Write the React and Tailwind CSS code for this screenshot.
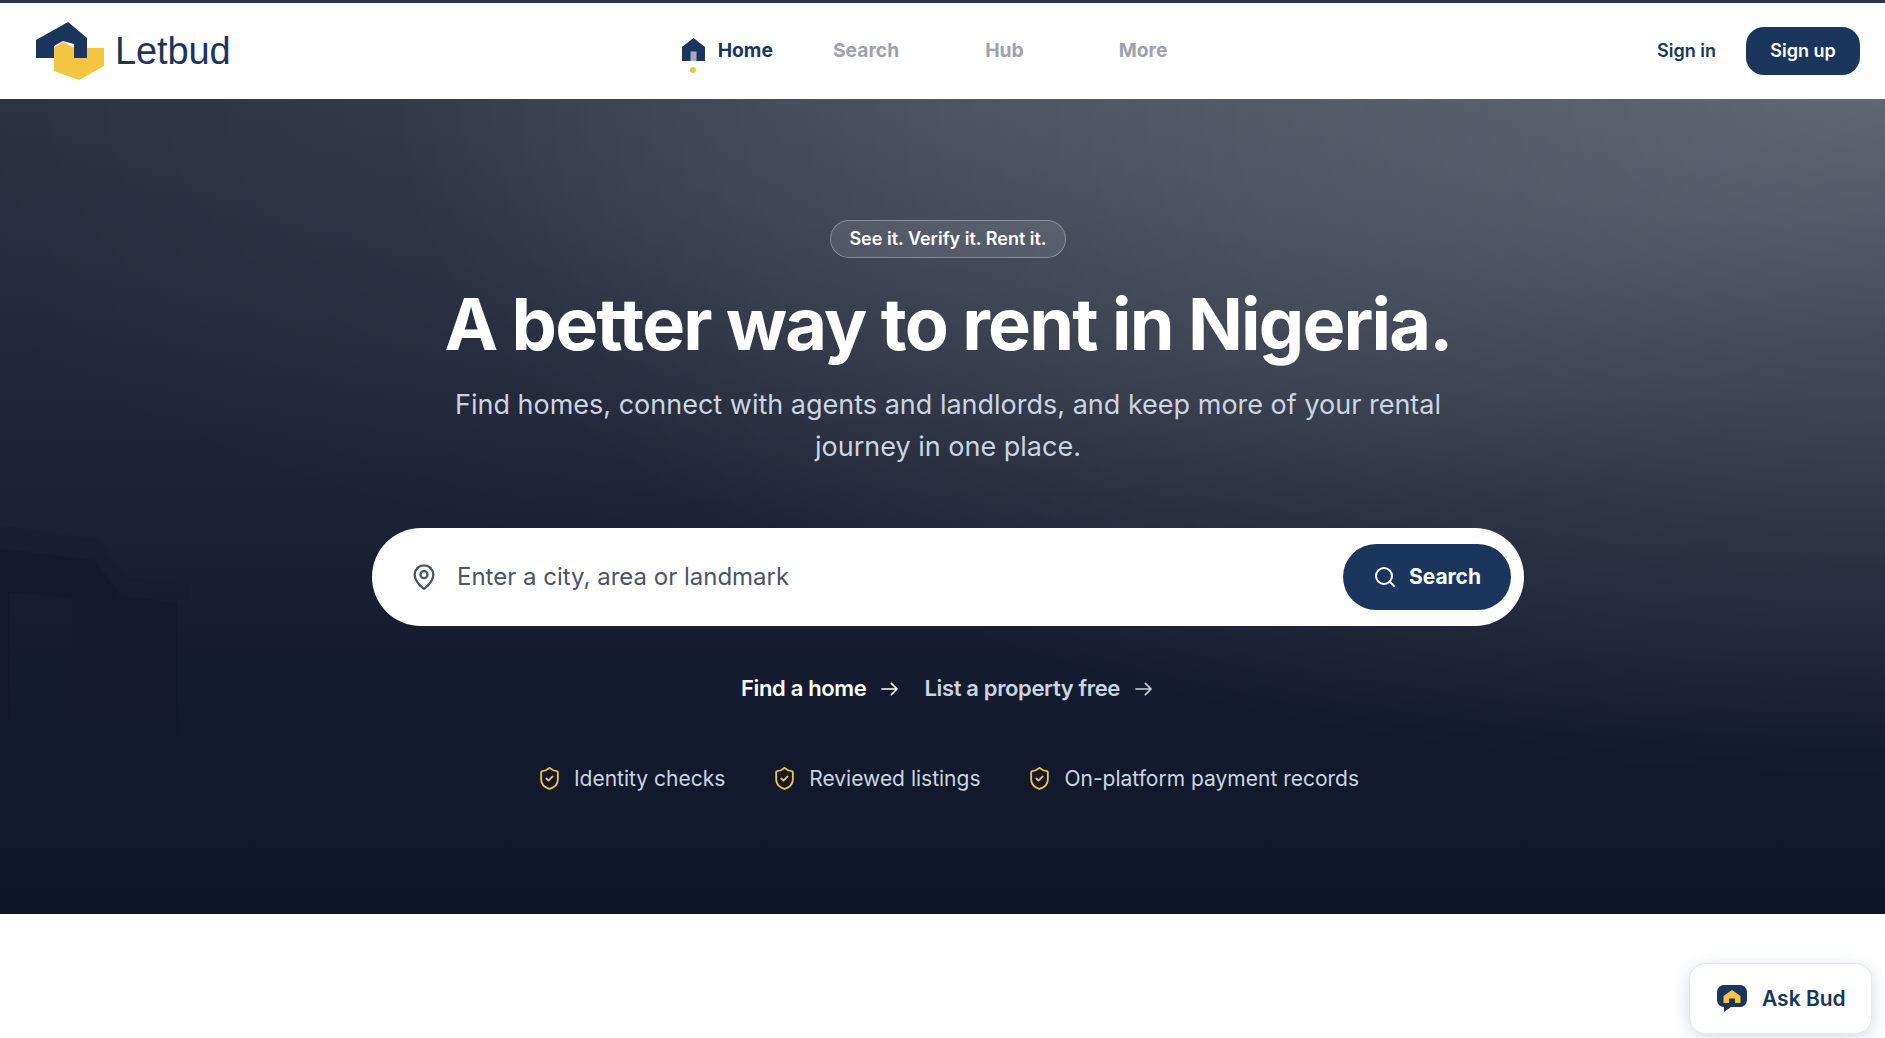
import React from "react";
import { MapPin, Search, ShieldCheck } from "lucide-react";

function Logo() {
  return (
    <svg width="68" height="58" viewBox="36 21 68 58" className="shrink-0">
      <path d="M104 47V65L79 79 54 70V46.500L63 40.700 74 46.500V57H87V47Z" fill="#f4c542" />
      <path d="M36 39 68 21 87 37V57H74V43L63 40 54 45V57H36Z" fill="#1a365d" />
    </svg>
  );
}

function HomeIcon() {
  return (
    <svg width="23" height="23" viewBox="0 0 23 23" className="-mt-[2px] shrink-0">
      <path d="M0 9 11.500 0 23 9V23H0Z" fill="#1a365d" />
      <rect x="8.500" y="13.500" width="6" height="9.500" fill="#a8adb8" />
    </svg>
  );
}

function BudIcon() {
  return (
    <svg width="30" height="28" viewBox="0 0 30 28" className="shrink-0">
      <path d="M7 0H23A7 7 0 0 1 30 7V15A7 7 0 0 1 23 22H14L7 27V22A7 7 0 0 1 0 15V7A7 7 0 0 1 7 0Z" fill="#1a365d" />
      <path d="M6.500 11 15 5 23.500 11V18H18V13.500H12V18H6.500Z" fill="#f4c542" />
    </svg>
  );
}

function Arrow({ className }) {
  return (
    <svg width="17" height="14" viewBox="0 0 18 14" fill="none" stroke="currentColor" strokeWidth="1.75" strokeLinecap="round" strokeLinejoin="round" className={className}>
      <path d="M1 7H17M11 1L17 7 11 13" />
    </svg>
  );
}

function Trust({ label }) {
  return (
    <div className="flex items-center gap-[12px]">
      <ShieldCheck size={25} strokeWidth={1.75} className="text-[#f4c542]" />
      <span>{label}</span>
    </div>
  );
}

function Backdrop() {
  return (
    <svg width="200" height="300" viewBox="0 480 200 300" className="absolute left-0 top-[381px]">
      <defs>
        <linearGradient id="fade" x1="0" y1="0" x2="0" y2="1">
          <stop offset="0" stopColor="#0f1526" stopOpacity="0.4" />
          <stop offset="0.7" stopColor="#0f1526" stopOpacity="0.4" />
          <stop offset="1" stopColor="#0f1526" stopOpacity="0" />
        </linearGradient>
      </defs>
      <path d="M0 525 100 540 125 577 190 585V600H0Z" fill="#0f1526" opacity="0.1" />
      <path fillRule="evenodd" d="M0 548 95 560 120 595 177 603V770H0ZM10 593V720H72V598Z" fill="url(#fade)" />
    </svg>
  );
}

export default function App() {
  return (
    <div className="relative h-[1038px] overflow-hidden bg-white font-['Inter',sans-serif]">
      <div className="h-[3px] bg-[#2f3648]" />
      <header className="flex h-[96px] items-center bg-white pl-[36px] pr-[25px]">
        <div className="flex items-center gap-[11px]">
          <Logo />
          <span className="font-['Liberation_Sans',sans-serif] text-[38px] leading-none tracking-[-0.1px] text-[#1a365d]">Letbud</span>
        </div>
        <nav className="-mt-[1px] ml-[451px] flex items-center text-[19.300px] font-bold text-[#9ca3af]">
          <div className="relative flex items-center gap-[13px] text-[#1a365d]">
            <HomeIcon />
            <span>Home</span>
            <span className="absolute left-[8px] top-[31px] h-[6px] w-[6px] rounded-full bg-[#f4c542]" />
          </div>
          <span className="ml-[60px]">Search</span>
          <span className="ml-[86px]">Hub</span>
          <span className="ml-[95px]">More</span>
        </nav>
        <div className="ml-auto flex items-center gap-[30px] text-[18px] font-semibold">
          <span className="-mt-[2px] text-[#1a365d]">Sign in</span>
          <span className="flex h-[48px] w-[114px] items-center justify-center rounded-[18px] bg-[#1a365d] pb-[2px] text-white">Sign up</span>
        </div>
      </header>

      <section className="relative flex h-[815px] flex-col items-center bg-[radial-gradient(ellipse_1500px_680px_at_100%_0%,rgba(255,255,255,0.25),rgba(255,255,255,0)_100%),radial-gradient(ellipse_1100px_480px_at_50%_0%,rgba(255,255,255,0.09),rgba(255,255,255,0)_100%),linear-gradient(180deg,#2a3040_0%,#222839_28%,#1c2133_50%,#131a2d_78%,#10172a_100%)] pl-[11px] pt-[121px]">
        <Backdrop />
        <div className="relative flex h-[38px] w-[236px] items-center justify-center rounded-full border border-white/30 bg-white/10 pb-[2px] text-[18px] font-semibold text-white">
          See it. Verify it. Rent it.
        </div>
        <h1 className="relative mt-[28px] text-[72px] font-bold leading-[76px] tracking-[-1.8px] text-white">
          A better way to rent in Nigeria.
        </h1>
        <p className="relative mt-[22px] w-[1020px] text-center text-[27px] leading-[42px] text-[#cbd5e1]">
          Find homes, connect with agents and landlords, and keep more of your rental journey in one place.
        </p>
        <div className="relative mt-[60px] flex h-[98px] w-[1152px] items-center rounded-full bg-white pl-[38px] pr-[13px]">
          <MapPin size={28} strokeWidth={2} className="text-[#4b5563]" />
          <span className="ml-[19px] text-[24px] text-[#4b5563]">Enter a city, area or landmark</span>
          <div className="ml-auto flex h-[66px] w-[168px] items-center justify-center gap-[12px] rounded-full bg-[#1a365d] text-[21px] font-bold text-white">
            <Search size={24} strokeWidth={2} />
            <span>Search</span>
          </div>
        </div>
        <div className="relative mt-[46px] flex items-center pr-[3px] text-[22px] font-semibold tracking-[-0.35px]">
          <span className="text-white">Find a home</span>
          <Arrow className="ml-[15px] text-white" />
          <span className="ml-[26px] text-[#cbd5e1]">List a property free</span>
          <Arrow className="ml-[15px] text-[#cbd5e1]" />
        </div>
        <div className="relative mt-[58px] flex items-center gap-[47px] text-[21px] text-[#cbd5e1]">
          <Trust label="Identity checks" />
          <Trust label="Reviewed listings" />
          <Trust label="On-platform payment records" />
        </div>
      </section>

      <div className="absolute bottom-[4px] right-[13px] flex h-[71px] w-[183px] items-center gap-[15px] rounded-[16px] border border-[#e5e7eb] bg-white pl-[27px] shadow-[0_4px_18px_rgba(26,54,93,0.18)]">
        <BudIcon />
        <span className="text-[21px] font-semibold text-[#1a365d]">Ask Bud</span>
      </div>
    </div>
  );
}
